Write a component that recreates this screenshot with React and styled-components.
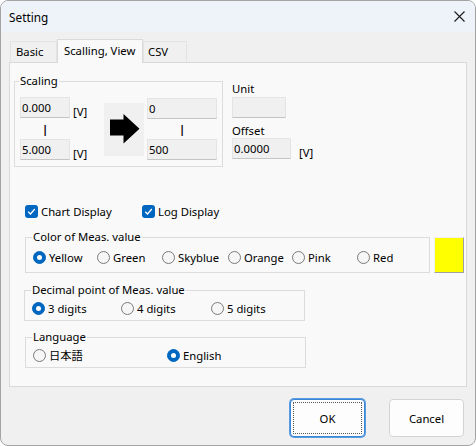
import React from 'react';
import styled, { createGlobalStyle } from 'styled-components';

const Global = createGlobalStyle`
  html, body { margin: 0; padding: 0; background: #ffffff; }
  body {
    font-family: "Noto Sans", "Noto Sans CJK JP", sans-serif;
    font-size: 11.3px;
    color: #000;
  }
  *, *::before, *::after { box-sizing: border-box; }
`;

const ACCENT = '#0067c0';

const Window = styled.div`
  width: 476px;
  height: 446px;
  border: 1px solid #a3a3a3;
  border-radius: 8px;
  background: #f0f0f0;
  display: flex;
  flex-direction: column;
  overflow: hidden;
`;

const TitleBar = styled.div`
  height: 31px;
  flex: none;
  background: #eef3fa;
  display: flex;
  align-items: center;
  justify-content: space-between;
  padding: 0 10px 0 8px;
  font-size: 11.8px;
`;

const Body = styled.div`
  flex: 1;
  display: flex;
  flex-direction: column;
  padding: 7px 8px 0 8px;
`;

const TabStrip = styled.div`
  display: flex;
  align-items: flex-end;
  height: 23px;
  padding-left: 1px;
`;

const Tab = styled.div`
  position: relative;
  z-index: ${p => (p.$active ? 1 : 0)};
  width: ${p => p.$w}px;
  height: ${p => (p.$active ? 24 : 21)}px;
  margin-bottom: ${p => (p.$active ? -1 : 0)}px;
  padding-left: ${p => p.$pl}px;
  padding-top: ${p => (p.$active ? 3 : 2)}px;
  line-height: 16px;
  background: ${p => (p.$active ? '#f9f9f9' : '#f0f0f0')};
  border: 1px solid ${p => (p.$active ? '#dadada' : '#e3e3e3')};
  border-bottom: none;
  white-space: nowrap;
`;

const Panel = styled.div`
  height: 325px;
  border: 1px solid #d9d9d9;
  background: #f9f9f9;
  padding: 11px 0 0 4px;
`;

const TopRow = styled.div`
  display: flex;
  align-items: flex-start;
  gap: 9px;
`;

const Group = styled.fieldset`
  margin: 0;
  margin-left: ${p => p.$left ?? 0}px;
  margin-top: ${p => p.$top ?? 0}px;
  width: ${p => p.$w}px;
  border: 1px solid #dcdcdc;
  padding: ${p => p.$pad};
  min-inline-size: 0;
`;

const Legend = styled.legend`
  padding: 0 1px;
  margin-left: -1px;
  line-height: 14px;
`;

const ScaleBody = styled.div`
  display: flex;
  align-items: center;
`;

const ValueCol = styled.div`
  width: ${p => p.$w}px;
  display: flex;
  flex-direction: column;
`;

const ValueRow = styled.div`
  display: flex;
  align-items: flex-start;
  gap: ${p => p.$gap ?? 3}px;
`;

const Field = styled.div`
  width: ${p => p.$w}px;
  height: 21px;
  background: #f0f0f0;
  border: 1px solid #e4e4e4;
  border-bottom-color: #c4c4c4;
  padding-left: 1px;
  line-height: 19px;
  white-space: nowrap;
`;

const Unit = styled.span`
  padding-top: 8px;
  line-height: 14px;
`;

const Sep = styled.div`
  width: ${p => p.$w}px;
  height: 20px;
  text-align: center;
  line-height: 20px;
  font-weight: 700;
  color: #000;
`;

const ArrowBox = styled.div`
  width: 40px;
  height: 53px;
  background: #f0f0f0;
  margin-right: 3px;
  display: flex;
`;

const SideCol = styled.div`
  display: flex;
  flex-direction: column;
  padding-top: 8px;
`;

const SideLabel = styled.div`
  line-height: 14px;
  margin-bottom: ${p => p.$mb}px;
  margin-top: ${p => p.$mt ?? 0}px;
`;

const Lower = styled.div`
  padding-left: 11px;
`;

const CheckRow = styled.div`
  display: flex;
  align-items: center;
  height: 16px;
  margin-top: 36px;
`;

const CheckItem = styled.label`
  width: ${p => p.$w}px;
  display: flex;
  align-items: center;
  gap: 3px;
  white-space: nowrap;
`;

const CheckBox = styled.span`
  width: 13px;
  height: 13px;
  border-radius: 3px;
  background: ${ACCENT};
  display: flex;
  align-items: center;
  justify-content: center;
  flex: none;
`;

const ColorRow = styled.div`
  display: flex;
  align-items: flex-start;
  margin-top: 11px;
`;

const Swatch = styled.div`
  width: 30px;
  height: 36px;
  margin-left: 4px;
  margin-top: 7px;
  background: #ffff00;
  border: 1px solid;
  border-color: #f0f0f0 #a0a0a0 #a0a0a0 #f0f0f0;
`;

const RadioRow = styled.div`
  display: flex;
  align-items: center;
  height: 16px;
`;

const RadioItem = styled.label`
  width: ${p => (p.$w ? `${p.$w}px` : 'auto')};
  display: flex;
  align-items: center;
  gap: 3px;
  white-space: nowrap;
`;

const RadioDot = styled.span`
  width: 13px;
  height: 13px;
  border-radius: 50%;
  flex: none;
  display: flex;
  align-items: center;
  justify-content: center;
  background: ${p => (p.$on ? ACCENT : '#f6f6f6')};
  border: 1px solid ${p => (p.$on ? ACCENT : '#7a7a7a')};
  &::after {
    content: '';
    display: ${p => (p.$on ? 'block' : 'none')};
    width: 5px;
    height: 5px;
    border-radius: 50%;
    background: #fff;
  }
`;

const ButtonRow = styled.div`
  display: flex;
  justify-content: flex-end;
  gap: 24px;
  margin-top: 12px;
  padding-right: 3px;
`;

const Button = styled.button`
  width: 75px;
  height: 38px;
  font: inherit;
  color: #000;
  background: #fdfdfd;
  border: 1px solid ${p => (p.$default ? '#3b86d6' : '#d3d3d3')};
  border-radius: 4px;
  box-shadow: ${p => (p.$default ? '0 0 0 1px #5b9be0' : 'none')};
  outline: ${p => (p.$default ? '1px dotted #555' : 'none')};
  outline-offset: -4px;
  padding: 0;
`;

function Radio({ on, w, children }) {
  return (
    <RadioItem $w={w}>
      <RadioDot $on={on} />
      {children}
    </RadioItem>
  );
}

function Check({ w, children }) {
  return (
    <CheckItem $w={w}>
      <CheckBox>
        <svg width="9" height="9" viewBox="0 0 9 9">
          <path d="M1.2 4.8 L3.5 7 L7.8 2" fill="none" stroke="#fff" strokeWidth="1.3" />
        </svg>
      </CheckBox>
      {children}
    </CheckItem>
  );
}

const colors = [
  ['Yellow', 64, true],
  ['Green', 65],
  ['Skyblue', 66],
  ['Orange', 64],
  ['Pink', 65],
  ['Red'],
];

export default function App() {
  return (
    <>
      <Global />
      <Window>
        <TitleBar>
          <span>Setting</span>
          <svg width="11" height="11" viewBox="0 0 11 11">
            <path d="M0.5 0.5 L10.5 10.5 M10.5 0.5 L0.5 10.5" stroke="#1b1b1b" strokeWidth="1.1" />
          </svg>
        </TitleBar>
        <Body>
          <TabStrip>
            <Tab $w={47} $pl={5}>Basic</Tab>
            <Tab $w={86} $pl={6} $active>Scalling, View</Tab>
            <Tab $w={44} $pl={4}>CSV</Tab>
          </TabStrip>
          <Panel>
            <TopRow>
              <Group $w={209} $pad="9px 5px 5px 5px">
                <Legend>Scaling</Legend>
                <ScaleBody>
                  <ValueCol $w={84}>
                    <ValueRow>
                      <Field $w={50}>0.000</Field>
                      <Unit>[V]</Unit>
                    </ValueRow>
                    <Sep $w={50}>|</Sep>
                    <ValueRow>
                      <Field $w={50}>5.000</Field>
                      <Unit>[V]</Unit>
                    </ValueRow>
                  </ValueCol>
                  <ArrowBox>
                    <svg width="40" height="53" viewBox="0 0 40 53">
                      <polygon
                        points="6,16.5 19.5,16.5 19.5,11 35.5,25.8 19.5,40.5 19.5,32.5 6,32.5"
                        fill="#000"
                      />
                    </svg>
                  </ArrowBox>
                  <ValueCol $w={70}>
                    <Field $w={70}>0</Field>
                    <Sep $w={70}>|</Sep>
                    <Field $w={70}>500</Field>
                  </ValueCol>
                </ScaleBody>
              </Group>
              <SideCol>
                <SideLabel $mb={1}>Unit</SideLabel>
                <Field $w={54} />
                <SideLabel $mt={6} $mb={0}>Offset</SideLabel>
                <ValueRow $gap={8}>
                  <Field $w={59}>0.0000</Field>
                  <Unit>[V]</Unit>
                </ValueRow>
              </SideCol>
            </TopRow>
            <Lower>
              <CheckRow>
                <Check w={117}>Chart Display</Check>
                <Check>Log Display</Check>
              </CheckRow>
              <ColorRow>
                <Group $w={405} $pad="5px 7px 7px 7px">
                  <Legend>Color of Meas. value</Legend>
                  <RadioRow>
                    {colors.map(([name, w, on]) => (
                      <Radio key={name} w={w} on={on}>{name}</Radio>
                    ))}
                  </RadioRow>
                </Group>
                <Swatch />
              </ColorRow>
              <Group $w={281} $left={-1} $top={10} $pad="3px 7px 4px 7px">
                <Legend>Decimal point of Meas. value</Legend>
                <RadioRow>
                  <Radio w={89} on>3 digits</Radio>
                  <Radio w={90}>4 digits</Radio>
                  <Radio>5 digits</Radio>
                </RadioRow>
              </Group>
              <Group $w={281} $top={9} $pad="3px 7px 4px 7px">
                <Legend>Language</Legend>
                <RadioRow>
                  <Radio w={134}>日本語</Radio>
                  <Radio on>English</Radio>
                </RadioRow>
              </Group>
            </Lower>
          </Panel>
          <ButtonRow>
            <Button $default>OK</Button>
            <Button>Cancel</Button>
          </ButtonRow>
        </Body>
      </Window>
    </>
  );
}
